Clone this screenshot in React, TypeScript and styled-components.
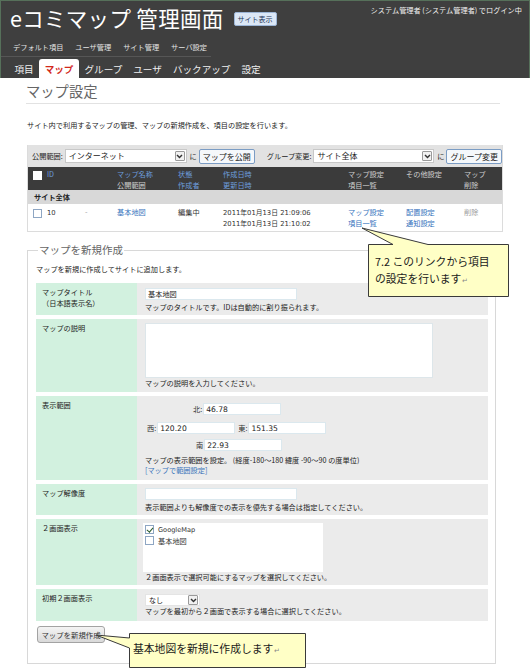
import React from 'react';
import styled, {createGlobalStyle} from 'styled-components';

const JP = `"Noto Sans CJK JP", "Noto Sans", sans-serif`;
const NUM = `"DejaVu Sans", "Noto Sans CJK JP", sans-serif`;
const COLS = '14px 38px 32px 61px 45px 125px 58px 58px 1fr';

const GlobalStyle = createGlobalStyle`
  html, body {
    margin: 0;
    padding: 0;
    background: #fff;
  }
  body {
    font-family: ${JP};
    color: #222;
  }
  * {
    box-sizing: border-box;
  }
`;

const App = () => {
  return (
    <Page>
      <GlobalStyle />
      <Header>
        <HeaderTop>
          <Brand>
            <BrandTitle>eコミマップ 管理画面</BrandTitle>
            <SiteButton>サイト表示</SiteButton>
          </Brand>
          <LoginInfo>システム管理者 (システム管理者) でログイン中</LoginInfo>
        </HeaderTop>
        <SubNav>
          <span>デフォルト項目</span>
          <span>ユーザ管理</span>
          <span>サイト管理</span>
          <span>サーバ設定</span>
        </SubNav>
        <TabBar>
          <Tab>項目</Tab>
          <Tab $active>マップ</Tab>
          <Tab>グループ</Tab>
          <Tab>ユーザ</Tab>
          <Tab>バックアップ</Tab>
          <Tab>設定</Tab>
        </TabBar>
      </Header>

      <PageTitle>マップ設定</PageTitle>
      <Lead>
        サイト内で利用するマップの管理、マップの新規作成を、項目の設定を行います。
      </Lead>

      <ListBox>
        <Toolbar>
          <ToolLabel>公開範囲:</ToolLabel>
          <SelectBox $w={122}>
            <SelectText>インターネット</SelectText>
            <SelectArrow>
              <Chevron />
            </SelectArrow>
          </SelectBox>
          <Particle>に</Particle>
          <SmallButton>マップを公開</SmallButton>
          <ToolLabel $gap={12}>グループ変更:</ToolLabel>
          <SelectBox $w={121}>
            <SelectText>サイト全体</SelectText>
            <SelectArrow>
              <Chevron />
            </SelectArrow>
          </SelectBox>
          <Particle>に</Particle>
          <SmallButton>グループ変更</SmallButton>
        </Toolbar>

        <GridRow $kind="head">
          <Cell>
            <CheckBox $light />
          </Cell>
          <Cell $tone="sort" $span={2}>
            ID
          </Cell>
          <Cell>
            <Line $tone="sort">マップ名称</Line>
            <Line $tone="head">公開範囲</Line>
          </Cell>
          <Cell $tone="sort">
            <Line>状態</Line>
            <Line>作成者</Line>
          </Cell>
          <Cell $tone="sort">
            <Line>作成日時</Line>
            <Line>更新日時</Line>
          </Cell>
          <Cell $tone="head">
            <Line>マップ設定</Line>
            <Line>項目一覧</Line>
          </Cell>
          <Cell $tone="head">その他設定</Cell>
          <Cell $tone="head">
            <Line>マップ</Line>
            <Line>削除</Line>
          </Cell>
        </GridRow>

        <GroupRow>サイト全体</GroupRow>

        <GridRow $kind="data">
          <Cell>
            <CheckBox />
          </Cell>
          <Cell $num>10</Cell>
          <Cell $tone="muted">-</Cell>
          <Cell $tone="link">基本地図</Cell>
          <Cell>編集中</Cell>
          <Cell $num>
            <Line>2011年01月13日 21:09:06</Line>
            <Line>2011年01月13日 21:10:02</Line>
          </Cell>
          <Cell $tone="link">
            <Line>マップ設定</Line>
            <Line>項目一覧</Line>
          </Cell>
          <Cell $tone="link">
            <Line>配置設定</Line>
            <Line>通知設定</Line>
          </Cell>
          <Cell $tone="muted">削除</Cell>
        </GridRow>
      </ListBox>

      <CreateSet>
        <Legend>マップを新規作成</Legend>
        <FormLead>マップを新規に作成してサイトに追加します。</FormLead>

        <FormRows>
          <FormRow>
            <FormLabel>
              マップタイトル
              <br />
              （日本語表示名）
            </FormLabel>
            <FormValue $pt={5} $pb={3}>
              <TextInput $w={152} readOnly defaultValue="基本地図" $jp />
              <Hint $mt={2}>
                マップのタイトルです。IDは自動的に割り振られます。
              </Hint>
            </FormValue>
          </FormRow>

          <FormRow>
            <FormLabel>マップの説明</FormLabel>
            <FormValue $pt={4} $pb={4}>
              <TextArea readOnly defaultValue="" />
              <Hint>マップの説明を入力してください。</Hint>
            </FormValue>
          </FormRow>

          <FormRow>
            <FormLabel>表示範囲</FormLabel>
            <FormValue $pt={7} $pb={5}>
              <CompassRow $indent={48}>
                <CompassLabel>北:</CompassLabel>
                <TextInput $w={78} readOnly defaultValue="46.78" />
              </CompassRow>
              <CompassRow $indent={2} $mt={7}>
                <CompassLabel>西:</CompassLabel>
                <TextInput $w={78} readOnly defaultValue="120.20" />
                <CompassLabel $ml={3}>東:</CompassLabel>
                <TextInput $w={78} readOnly defaultValue="151.35" />
              </CompassRow>
              <CompassRow $indent={51} $mt={5}>
                <CompassLabel>南</CompassLabel>
                <TextInput $w={78} readOnly defaultValue="22.93" />
              </CompassRow>
              <Hint $mt={4}>
                マップの表示範囲を設定。 (経度-180～180 緯度 -90～90 の度単位)
              </Hint>
              <HintLink>[マップで範囲設定]</HintLink>
            </FormValue>
          </FormRow>

          <FormRow>
            <FormLabel>マップ解像度</FormLabel>
            <FormValue $pt={4} $pb={3}>
              <TextInput $w={152} readOnly defaultValue="" />
              <Hint $mt={2}>
                表示範囲よりも解像度での表示を優先する場合は指定してください。
              </Hint>
            </FormValue>
          </FormRow>

          <FormRow>
            <FormLabel>２画面表示</FormLabel>
            <FormValue $pt={4} $pb={3}>
              <MapList>
                <MapItem>
                  <CheckBox $checked />
                  <ItemText $num>GoogleMap</ItemText>
                </MapItem>
                <MapItem>
                  <CheckBox />
                  <ItemText>基本地図</ItemText>
                </MapItem>
              </MapList>
              <Hint>２画面表示で選択可能にするマップを選択してください。</Hint>
            </FormValue>
          </FormRow>

          <FormRow $gap={5}>
            <FormLabel>初期２画面表示</FormLabel>
            <FormValue $pt={5} $pb={5}>
              <SelectBox $w={55} $h={12} $plain>
                <SelectText $small>なし</SelectText>
                <SelectArrow>
                  <Chevron />
                </SelectArrow>
              </SelectBox>
              <Hint>マップを最初から２画面で表示する場合に選択してください。</Hint>
            </FormValue>
          </FormRow>
        </FormRows>

        <SubmitButton>マップを新規作成</SubmitButton>
      </CreateSet>

      <Callout $left={368} $top={244} $w={141} $h={53}>
        <CalloutShape
          d="M0.5,0.5 H25 L-6,-16 L60,0.5 H140.5 V52.5 H0.5 Z"
        />
        <CalloutText $pt={9} $pl={7}>
          7.2 このリンクから項目
          <br />
          の設定を行います<ReturnMark>↵</ReturnMark>
        </CalloutText>
      </Callout>

      <Callout $left={129} $top={633} $w={177} $h={35}>
        <CalloutShape d="M0.5,0.5 H176.5 V34.5 H0.5 V15 L-33,2 L0.5,5 Z" />
        <CalloutText $pt={7} $pl={4}>
          基本地図を新規に作成します<ReturnMark>↵</ReturnMark>
        </CalloutText>
      </Callout>
    </Page>
  );
};

export default App;

const Chevron = () => (
  <svg width="7" height="5" viewBox="0 0 7 5">
    <path d="M1 1 L3.5 3.6 L6 1" fill="none" stroke="#333" strokeWidth="1.4" />
  </svg>
);

const CalloutShape = ({d}: {d: string}) => (
  <ShapeSvg width="100%" height="100%">
    <path d={d} fill="#ffffc6" stroke="#3a3a3a" strokeWidth="1" />
  </ShapeSvg>
);

const Page = styled.div`
  position: relative;
  width: 530px;
  height: 670px;
  overflow: hidden;
  background: #fff;
`;

const Header = styled.div`
  height: 78px;
  background: #3f3f3f;
  border: 1px solid #56705a;
  border-bottom: none;
`;

const HeaderTop = styled.div`
  display: flex;
  justify-content: space-between;
  align-items: flex-start;
  height: 40px;
`;

const Brand = styled.div`
  display: flex;
  align-items: center;
  gap: 10px;
  padding: 5px 0 0 9px;
`;

const BrandTitle = styled.h1`
  margin: 0;
  font-size: 21.5px;
  line-height: 24px;
  font-weight: 400;
  letter-spacing: 0.3px;
  color: #fff;
  white-space: nowrap;
`;

const SiteButton = styled.span`
  margin-top: 2px;
  padding: 0 3px;
  font-size: 7px;
  line-height: 12px;
  color: #1d3556;
  background: #dbe7f6;
  border: 1px solid #9cb5d6;
  border-radius: 2px;
  white-space: nowrap;
`;

const LoginInfo = styled.div`
  padding: 4px 7px 0 0;
  font-size: 7.2px;
  line-height: 10px;
  color: #f2f2f2;
  white-space: nowrap;
`;

const SubNav = styled.div`
  display: flex;
  gap: 12px;
  width: 210px;
  margin-top: 1px;
  padding: 0 0 4px 12px;
  font-size: 7.2px;
  line-height: 10px;
  color: #e4e4e4;
  border-bottom: 1px solid #565656;
  white-space: nowrap;
`;

const TabBar = styled.div`
  display: flex;
  align-items: flex-end;
  height: 22px;
  padding: 2px 0 0 8px;
`;

const Tab = styled.span<{$active?: boolean}>`
  padding: 0 5.5px;
  font-size: 9.6px;
  line-height: 20px;
  font-weight: ${(p) => (p.$active ? 700 : 400)};
  color: ${(p) => (p.$active ? '#d2281b' : '#f0f0f0')};
  background: ${(p) => (p.$active ? '#fff' : 'transparent')};
  border-radius: 3px 3px 0 0;
  white-space: nowrap;
`;

const PageTitle = styled.h2`
  margin: 3px 30px 0 26px;
  padding-bottom: 2px;
  font-size: 14.3px;
  line-height: 20px;
  font-weight: 400;
  color: #666;
  border-bottom: 1px solid #e2e2e2;
`;

const Lead = styled.p`
  margin: 16px 0 0 27px;
  font-size: 7.2px;
  line-height: 10px;
  color: #222;
`;

const ListBox = styled.div`
  width: 476px;
  margin: 15px 0 0 27px;
  border: 1px solid #dcdcdc;
  border-top: none;
`;

const Toolbar = styled.div`
  display: flex;
  align-items: center;
  height: 22px;
  padding-left: 4px;
  background: #e2e2e2;
  font-size: 7.2px;
`;

const ToolLabel = styled.span<{$gap?: number}>`
  margin: 0 2px 0 ${(p) => p.$gap ?? 0}px;
  white-space: nowrap;
`;

const SelectBox = styled.div<{$w: number; $h?: number; $plain?: boolean}>`
  display: flex;
  align-items: center;
  justify-content: space-between;
  width: ${(p) => p.$w}px;
  height: ${(p) => p.$h ?? 14}px;
  padding: 0 1px 0 3px;
  background: #fff;
  border: 1px solid ${(p) => (p.$plain ? '#e4e4e4' : '#c8c8c8')};
`;

const SelectText = styled.span<{$small?: boolean}>`
  font-size: ${(p) => (p.$small ? 7 : 8)}px;
  line-height: 12px;
  white-space: nowrap;
`;

const SelectArrow = styled.span`
  display: flex;
  align-items: center;
  justify-content: center;
  width: 10px;
  height: 10px;
  background: #f1f1f1;
  border: 1px solid #9a9a9a;
  border-radius: 1px;
`;

const Particle = styled.span`
  margin: 0 2px 0 3px;
  font-size: 7.2px;
`;

const SmallButton = styled.span`
  height: 15px;
  padding: 0 3px;
  font-size: 8px;
  line-height: 13px;
  color: #222;
  background: #f5f8fb;
  border: 1px solid #7b9cc4;
  border-radius: 2px;
  white-space: nowrap;
`;

const GridRow = styled.div<{$kind: 'head' | 'data'}>`
  display: grid;
  grid-template-columns: ${COLS};
  padding: ${(p) => (p.$kind === 'head' ? '1px' : '2px')} 0 0 5px;
  height: ${(p) => (p.$kind === 'head' ? 23 : 27)}px;
  background: ${(p) => (p.$kind === 'head' ? '#3b3b3b' : '#fff')};
  color: #333;
  font-size: 7.2px;
  line-height: ${(p) => (p.$kind === 'head' ? 11 : 10.5)}px;
`;

const toneColor = {
  plain: '#333',
  sort: '#6e9ede',
  head: '#cfcfcf',
  link: '#3673bd',
  muted: '#9a9a9a',
};

type Tone = keyof typeof toneColor;

const Cell = styled.div<{$tone?: Tone; $span?: number; $num?: boolean}>`
  grid-column: span ${(p) => p.$span ?? 1};
  color: ${(p) => (p.$tone ? toneColor[p.$tone] : 'inherit')};
  font-family: ${(p) => (p.$num ? NUM : JP)};
  font-size: ${(p) => (p.$num ? '6.8px' : 'inherit')};
  padding-top: ${(p) => (p.$num ? 2 : 1)}px;
  white-space: nowrap;
`;

const Line = styled.div<{$tone?: Tone}>`
  color: ${(p) => (p.$tone ? toneColor[p.$tone] : 'inherit')};
`;

const GroupRow = styled.div`
  height: 14px;
  padding-left: 6px;
  background: #d8d8d8;
  font-size: 7.2px;
  line-height: 14px;
  font-weight: 700;
  color: #222;
`;

const CheckBox = styled.span<{$checked?: boolean; $light?: boolean}>`
  position: relative;
  display: inline-block;
  width: 9px;
  height: 9px;
  margin-top: 2px;
  background: #fff;
  border: 1px solid ${(p) => (p.$light ? '#fff' : '#8ea6c3')};
  vertical-align: top;
  &::after {
    content: '';
    display: ${(p) => (p.$checked ? 'block' : 'none')};
    position: absolute;
    left: 2px;
    top: 0px;
    width: 2.5px;
    height: 5px;
    border: solid #2a5a2a;
    border-width: 0 1.3px 1.3px 0;
    transform: rotate(40deg);
  }
`;

const CreateSet = styled.fieldset`
  width: 469px;
  height: 421px;
  margin: 11px 0 0 27px;
  padding: 0 7px 0 8px;
  border: 1px solid #d8d8d8;
  min-inline-size: 0;
`;

const Legend = styled.legend`
  margin-left: 2px;
  padding: 0 1px;
  font-size: 10.5px;
  line-height: 14px;
  color: #666;
`;

const FormLead = styled.p`
  margin: 7px 0 0;
  font-size: 7.2px;
  line-height: 10px;
`;

const FormRows = styled.div`
  display: flex;
  flex-direction: column;
  margin-top: 9px;
`;

const FormRow = styled.div<{$gap?: number}>`
  display: grid;
  grid-template-columns: 101px 1fr;
  margin-bottom: ${(p) => p.$gap ?? 4}px;
  &:last-child {
    margin-bottom: 0;
  }
`;

const FormLabel = styled.div`
  padding: 4px 6px;
  background: #d2f1df;
  font-size: 7.2px;
  line-height: 10.5px;
  color: #222;
`;

const FormValue = styled.div<{$pt: number; $pb: number}>`
  padding: ${(p) => p.$pt}px 8px ${(p) => p.$pb}px 8px;
  background: #ebebeb;
`;

const TextInput = styled.input<{$w: number; $jp?: boolean}>`
  display: block;
  width: ${(p) => p.$w}px;
  height: 12px;
  margin: 0;
  padding: 0 2px;
  font-family: ${(p) => (p.$jp ? JP : NUM)};
  font-size: ${(p) => (p.$jp ? '7.2px' : '7.6px')};
  line-height: 10px;
  color: #222;
  background: #fff;
  border: 1px solid #dbe8ee;
  outline: none;
`;

const TextArea = styled.textarea`
  display: block;
  width: 288px;
  height: 55px;
  margin: 0;
  padding: 2px;
  background: #fff;
  border: 1px solid #dde6ea;
  resize: none;
  outline: none;
`;

const Hint = styled.div<{$mt?: number}>`
  margin-top: ${(p) => p.$mt ?? 0}px;
  font-size: 7.2px;
  line-height: 10px;
  color: #222;
  white-space: nowrap;
`;

const HintLink = styled(Hint)`
  color: #3a74ba;
`;

const CompassRow = styled.div<{$indent: number; $mt?: number}>`
  display: flex;
  align-items: center;
  margin-top: ${(p) => p.$mt ?? 0}px;
  padding-left: ${(p) => p.$indent}px;
`;

const CompassLabel = styled.span<{$ml?: number}>`
  margin: 0 1px 0 ${(p) => p.$ml ?? 0}px;
  font-size: 7.2px;
  line-height: 10px;
  color: #333;
`;

const MapList = styled.div`
  width: 180px;
  height: 49px;
  margin-left: -2px;
  padding: 1px 2px;
  background: #fff;
`;

const MapItem = styled.div`
  display: flex;
  align-items: center;
  gap: 4px;
  height: 11px;
  & > span:first-child {
    margin-top: 0;
  }
`;

const ItemText = styled.span<{$num?: boolean}>`
  font-family: ${(p) => (p.$num ? NUM : JP)};
  font-size: ${(p) => (p.$num ? '6.6px' : '7.2px')};
  line-height: 10px;
  color: #333;
`;

const SubmitButton = styled.button`
  display: block;
  width: 68px;
  height: 17px;
  margin: 5px 0 0 1px;
  padding: 0;
  font-family: ${JP};
  font-size: 7.4px;
  line-height: 15px;
  color: #333;
  background: linear-gradient(#f4f4f4, #d9d9d9);
  border: 1px solid #a3a3a3;
  border-radius: 3px;
`;

const Callout = styled.div<{$left: number; $top: number; $w: number; $h: number}>`
  position: absolute;
  left: ${(p) => p.$left}px;
  top: ${(p) => p.$top}px;
  width: ${(p) => p.$w}px;
  height: ${(p) => p.$h}px;
`;

const ShapeSvg = styled.svg`
  position: absolute;
  inset: 0;
  overflow: visible;
`;

const CalloutText = styled.div<{$pt: number; $pl: number}>`
  position: relative;
  padding: ${(p) => p.$pt}px 0 0 ${(p) => p.$pl}px;
  font-size: 10.8px;
  line-height: 17px;
  color: #1a1a1a;
  white-space: nowrap;
`;

const ReturnMark = styled.span`
  margin-left: 1px;
  font-size: 7px;
  color: #888;
`;
